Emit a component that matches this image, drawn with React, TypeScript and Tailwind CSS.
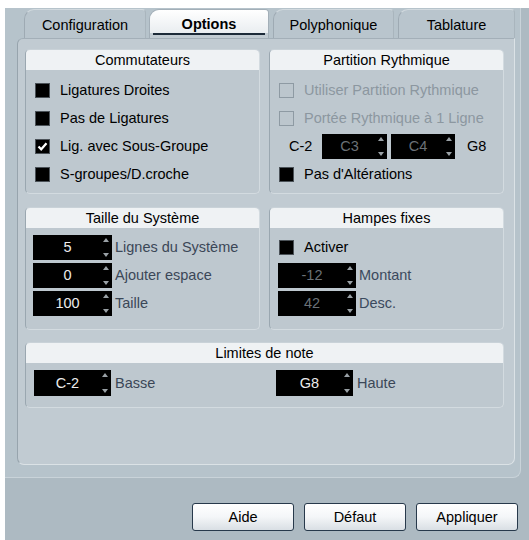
import React from "react";

function Check({ checked = false, disabled = false }: { checked?: boolean; disabled?: boolean }) {
  return (
    <div
      className={
        disabled
          ? "w-[15px] h-[15px] shrink-0 flex items-center justify-center border border-[#8e9aa3] bg-[#bcc6cd]"
          : "w-[15px] h-[15px] shrink-0 flex items-center justify-center border border-[#4b5258] bg-black"
      }
    >
      {checked && (
        <svg width="11" height="11" viewBox="0 0 11 11">
          <path d="M1.5 5.5 L4.2 8.3 L9.5 2.2" stroke="#ffffff" strokeWidth="2.2" fill="none" />
        </svg>
      )}
    </div>
  );
}

function Spin({ value, w, dim = false, h = "h-[25px]" }: { value: string; w: string; dim?: boolean; h?: string }) {
  return (
    <div className={`${w} ${h} bg-black flex items-center shrink-0`}>
      <span className={dim ? "flex-1 text-center text-[#6b7177]" : "flex-1 text-center text-[#ececec]"}>{value}</span>
      <div className="w-[10px] h-full flex flex-col justify-between items-center py-[3px] pr-[2px]">
        <svg width="6" height="4" viewBox="0 0 6 4">
          <path d="M0 4 L3 0 L6 4 Z" fill="#9aa1a6" />
        </svg>
        <svg width="6" height="4" viewBox="0 0 6 4">
          <path d="M0 0 L3 4 L6 0 Z" fill="#9aa1a6" />
        </svg>
      </div>
    </div>
  );
}

function Group({ title, className, children }: { title: string; className: string; children?: React.ReactNode }) {
  return (
    <div
      className={`${className} rounded-[5px] bg-[#bec8cf] border border-l-[#9aa7b0] border-t-[#c9d2d8] border-r-[#d3dbe0] border-b-[#d3dbe0] overflow-hidden flex flex-col`}
    >
      <div className="h-[20px] shrink-0 bg-[#eff2f4] text-center leading-[20px] text-black">{title}</div>
      {children}
    </div>
  );
}

function Tab({ label, w, selected = false }: { label: string; w: string; selected?: boolean }) {
  if (selected) {
    return (
      <div className={`${w} h-[29px] rounded-tl-[10px] rounded-tr-[4px] border border-b-0 border-[#a3afb8] bg-[#c1cbd2] flex flex-col overflow-hidden`}>
        <div className="h-[23px] bg-gradient-to-b from-[#ffffff] to-[#e9edf0] flex items-center justify-center font-bold text-black pt-[6px]">
          {label}
        </div>
        <div className="h-[2px] mx-[3px] bg-[#1c2a38]" />
      </div>
    );
  }
  return (
    <div
      className={`${w} h-[29px] rounded-tl-[10px] rounded-tr-[4px] border border-b-0 border-l-[#9eaab3] border-t-[#d2dadf] border-r-[#a9b5bd] bg-[#b9c5cd] flex items-center justify-center text-black pt-[3px]`}
    >
      {label}
    </div>
  );
}

function CheckRow({ label, checked = false, disabled = false }: { label: string; checked?: boolean; disabled?: boolean }) {
  return (
    <div className="h-[28px] flex items-center pl-[9px] gap-[10px]">
      <Check checked={checked} disabled={disabled} />
      <span className={disabled ? "text-[#8c97a0]" : "text-black"}>{label}</span>
    </div>
  );
}

function Button({ label }: { label: string }) {
  return (
    <div className="w-[102px] h-[28px] rounded-[3px] border border-[#27394b] bg-gradient-to-b from-[#ffffff] via-[#f4f6f8] to-[#d9dfe4] flex items-center justify-center text-black">
      {label}
    </div>
  );
}

export default function App() {
  return (
    <div className="w-[529px] h-[540px] bg-white overflow-hidden font-['Liberation_Sans',Arial,sans-serif] text-[14.5px] leading-none">
      <div className="ml-[5px] mt-[8px] w-[524px] h-[532px] bg-[#adbac2] flex flex-col">
        <div className="w-[516px] h-[470px] bg-[#b6c3cb] border-r border-b border-[#c9d3d9] rounded-br-[8px] pt-[1px] pl-[12px] flex flex-col">
          <div className="h-[29px] flex items-end pl-[7px]">
            <Tab label="Configuration" w="w-[122px]" />
            <div className="w-[3px]" />
            <Tab label="Options" w="w-[120px]" selected />
            <div className="w-[4px]" />
            <Tab label="Polyphonique" w="w-[121px]" />
            <div className="w-[4px]" />
            <Tab label="Tablature" w="w-[117px]" />
          </div>
          <div className="w-[498px] h-[427px] rounded-b-[7px] rounded-tl-[6px] bg-[#c1cbd2] border border-l-[#97a4ad] border-t-[#a3afb8] border-r-[#dbe2e6] border-b-[#dbe2e6] pt-[10px] pl-[7px] pr-[10px]">
            <div className="flex gap-[9px]">
              <Group title="Commutateurs" className="w-[235px] h-[145px]">
                <div className="pt-[6px]">
                  <CheckRow label="Ligatures Droites" />
                  <CheckRow label="Pas de Ligatures" />
                  <CheckRow label="Lig. avec Sous-Groupe" checked />
                  <CheckRow label="S-groupes/D.croche" />
                </div>
              </Group>
              <Group title="Partition Rythmique" className="w-[235px] h-[145px]">
                <div className="pt-[6px]">
                  <CheckRow label="Utiliser Partition Rythmique" disabled />
                  <CheckRow label="Portée Rythmique à 1 Ligne" disabled />
                  <div className="h-[28px] flex items-center pl-[19px]">
                    <span className="w-[33px] text-black">C-2</span>
                    <Spin value="C3" w="w-[65px]" dim />
                    <div className="w-[4px]" />
                    <Spin value="C4" w="w-[64px]" dim />
                    <span className="ml-[12px] text-black">G8</span>
                  </div>
                  <CheckRow label="Pas d'Altérations" />
                </div>
              </Group>
            </div>
            <div className="flex gap-[9px] mt-[13px]">
              <Group title="Taille du Système" className="w-[235px] h-[123px]">
                <div className="pt-[7px] pl-[7px] flex flex-col gap-[3px]">
                  <div className="flex items-center gap-[3px]">
                    <Spin value="5" w="w-[79px]" />
                    <span className="text-[#3b4757]">Lignes du Système</span>
                  </div>
                  <div className="flex items-center gap-[3px]">
                    <Spin value="0" w="w-[79px]" />
                    <span className="text-[#3b4757]">Ajouter espace</span>
                  </div>
                  <div className="flex items-center gap-[3px]">
                    <Spin value="100" w="w-[79px]" />
                    <span className="text-[#3b4757]">Taille</span>
                  </div>
                </div>
              </Group>
              <Group title="Hampes fixes" className="w-[235px] h-[123px]">
                <div className="pt-[7px] flex flex-col gap-[3px]">
                  <div className="h-[25px] flex items-center pl-[9px] gap-[10px]">
                    <Check />
                    <span className="text-black">Activer</span>
                  </div>
                  <div className="flex items-center gap-[3px] pl-[8px]">
                    <Spin value="-12" w="w-[78px]" dim />
                    <span className="text-[#3b4a5e]">Montant</span>
                  </div>
                  <div className="flex items-center gap-[3px] pl-[8px]">
                    <Spin value="42" w="w-[78px]" dim />
                    <span className="text-[#3b4a5e]">Desc.</span>
                  </div>
                </div>
              </Group>
            </div>
            <Group title="Limites de note" className="w-[479px] h-[66px] mt-[12px]">
              <div className="pt-[7px] pl-[8px] flex items-center">
                <div className="w-[242px] flex items-center gap-[4px]">
                  <Spin value="C-2" w="w-[77px]" h="h-[26px]" />
                  <span className="text-[#3b4757]">Basse</span>
                </div>
                <div className="flex items-center gap-[4px]">
                  <Spin value="G8" w="w-[77px]" h="h-[26px]" />
                  <span className="text-[#3b4757]">Haute</span>
                </div>
              </div>
            </Group>
          </div>
        </div>
        <div className="flex justify-end gap-[10px] pr-[11px] pt-[25px]">
          <Button label="Aide" />
          <Button label="Défaut" />
          <Button label="Appliquer" />
        </div>
      </div>
    </div>
  );
}
